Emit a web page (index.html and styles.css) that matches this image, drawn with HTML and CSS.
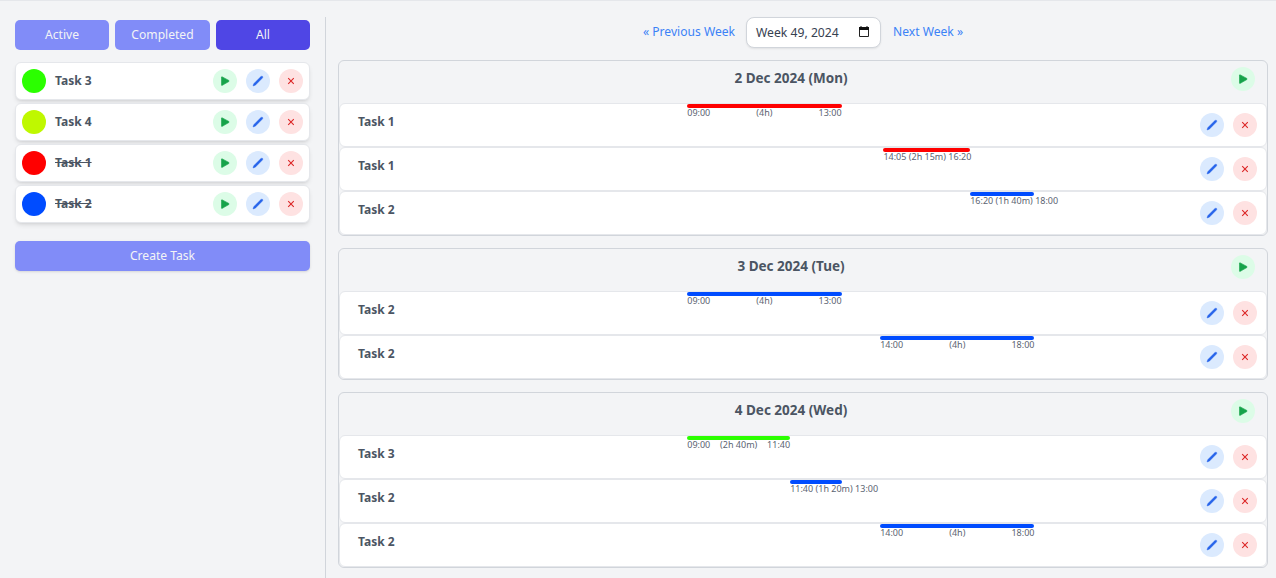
FILE: index.html
```html
<!DOCTYPE html>
<html lang="en">
<head>
<meta charset="utf-8">
<title>Tasks</title>
<link rel="stylesheet" href="styles.css">
</head>
<body>
<svg class="defs" aria-hidden="true">
  <symbol id="play" viewBox="0 0 24 24"><path d="M8.5 8.3Q8.5 7.5 9.3 7.9L15.8 11.4Q16.5 12 15.8 12.6L9.3 16.3Q8.5 16.7 8.5 15.9Z" fill="#16a34a" stroke="#16a34a" stroke-width=".6"/></symbol>
  <symbol id="pencil" viewBox="0 0 24 24"><path d="M7 17L7.7 14.7L14.9 7.6Q15.8 6.9 16.6 7.4Q17.1 8.2 16.4 9.1L9.3 16.2Z" fill="#2563eb" stroke="#2563eb" stroke-width=".4" stroke-linejoin="round"/></symbol>
  <symbol id="cross" viewBox="0 0 24 24"><path d="M9.2 9.2L14.8 14.8M14.8 9.2L9.2 14.8" fill="none" stroke="#dc2626" stroke-width="1.1"/></symbol>
</svg>
<div class="page">
  <aside class="sidebar">
    <div class="filters">
      <button class="btn">Active</button>
      <button class="btn">Completed</button>
      <button class="btn selected">All</button>
    </div>
    <ul class="tasks" id="tasks"></ul>
    <button class="btn create">Create Task</button>
  </aside>
  <main class="main">
    <nav class="weeks">
      <a class="link">« Previous Week</a>
      <div class="picker"><span>Week 49, 2024</span>
        <svg class="calendar" viewBox="0 0 12 12"><path d="M1.5 2.5H10.5V10.5H1.5Z" fill="none" stroke="#222" stroke-width="1"/><path d="M1 1H11V4H1Z" fill="#111"/><path d="M3 0V2M9 0V2" stroke="#111" stroke-width="1"/></svg>
      </div>
      <a class="link">Next Week »</a>
    </nav>
    <div class="days" id="days"></div>
  </main>
</div>
<script src="app.js"></script>
</body>
</html>
```
FILE: styles.css
```css
* { box-sizing: border-box; }
body {
  margin: 0;
  height: 578px;
  overflow: hidden;
  background: #f3f4f6;
  color: #4b5563;
  font: 12px/20px "Noto Sans", sans-serif;
}
.defs { display: none; }
.page {
  display: flex;
  height: 578px;
  border-top: 1px solid #e5e7eb;
  padding-top: 16px;
}
.sidebar {
  width: 326px;
  flex: none;
  padding: 3px 15px 0;
  border-right: 1px solid #d1d5db;
}
.filters { display: grid; grid-template-columns: 94px 95px 94px; gap: 6px; }
.btn {
  height: 30px;
  padding: 0;
  border: 0;
  border-radius: 5px;
  background: #818cf8;
  color: #f3f4f6;
  font: 12.1px/28px "Noto Sans", sans-serif;
}
.btn.selected { background: #4f46e5; }
.btn.create { width: 295px; box-shadow: 0 1px 3px rgba(0,0,0,.1), 0 1px 2px -1px rgba(0,0,0,.1); }
.tasks {
  display: flex;
  flex-direction: column;
  gap: 3px;
  margin: 12px 0 18px;
  padding: 0;
  list-style: none;
}
.task {
  display: flex;
  align-items: center;
  height: 38px;
  width: 295px;
  padding: 0 6px;
  background: #fff;
  border: 1px solid #e5e7eb;
  border-radius: 6px;
  box-shadow: 0 3px 5px -1px rgba(0,0,0,.1), 0 2px 3px -2px rgba(0,0,0,.1);
}
.swatch { width: 24px; height: 24px; border-radius: 50%; }
.name { flex: 1; margin-left: 9px; padding-bottom: 1px; font-weight: 700; }
.done { text-decoration: line-through; }
.actions { display: flex; gap: 9px; }
.icon { display: block; width: 24px; height: 24px; border-radius: 50%; }
.icon.play { background: #dcfce7; }
.icon.pencil { background: #dbeafe; }
.icon.cross { background: #fee2e2; }
.main { flex: 1; padding: 0 8px 0 12px; }
.weeks { display: flex; justify-content: center; align-items: center; gap: 12px; height: 31px; padding-right: 1px; }
.link { color: #3b82f6; padding-bottom: 1px; font-size: 12.1px; white-space: nowrap; }
.link:first-child { width: 91px; }
.link:last-child { width: 69px; }
.picker {
  display: flex;
  align-items: center;
  justify-content: space-between;
  width: 135px;
  height: 31px;
  padding: 0 10px 0 9px;
  background: #fff;
  border: 1px solid #d1d5db;
  border-radius: 8px;
  color: #374151;
  font-size: 12.2px;
  box-shadow: 0 1px 2px rgba(0,0,0,.08);
}
.calendar { width: 12px; height: 12px; margin-bottom: 1px; }
.days { display: flex; flex-direction: column; gap: 12px; margin-top: 12px; }
.day { border: 1px solid #d1d5db; border-radius: 6px; }
.day-head { display: flex; height: 42px; padding: 6px 12px 0; }
.date { flex: 1; text-align: center; font-weight: 700; font-size: 13.5px; line-height: 22px; }
.entry {
  display: grid;
  height: 44px;
  background: #fff;
  border: 1px solid #e5e7eb;
  border-radius: 6px;
}
.entry > * { grid-area: 1 / 1; min-width: 0; }
.entry-row { display: flex; align-items: flex-start; padding: 9px 9px 0 18px; }
.entry-row .name { margin: -1px 0 0; }
.bar { height: 4px; border-radius: 2px; }
.times {
  display: flex;
  justify-content: space-between;
  gap: 2.4px;
  white-space: nowrap;
  font-size: 9px;
  line-height: 9px;
  color: #5b6472;
}
```
FILE: app.js
```js
const icon = n => `<svg class="icon ${n}"><use href="#${n}"/></svg>`;

const tasks = {
  'Task 3': { color: '#2bff00' },
  'Task 4': { color: '#bff800' },
  'Task 1': { color: '#ff0000', done: true },
  'Task 2': { color: '#004cff', done: true },
};

const days = [
  ['2 Dec 2024 (Mon)', [['Task 1', '09:00', '4h', '13:00'], ['Task 1', '14:05', '2h 15m', '16:20'], ['Task 2', '16:20', '1h 40m', '18:00']]],
  ['3 Dec 2024 (Tue)', [['Task 2', '09:00', '4h', '13:00'], ['Task 2', '14:00', '4h', '18:00']]],
  ['4 Dec 2024 (Wed)', [['Task 3', '09:00', '2h 40m', '11:40'], ['Task 2', '11:40', '1h 20m', '13:00'], ['Task 2', '14:00', '4h', '18:00']]],
];

// Position of a clock time within the day, in percent.
const percent = t => {
  const [h, m] = t.split(':').map(Number);
  return (h * 60 + m) / 14.4;
};

document.getElementById('tasks').innerHTML = Object.entries(tasks).map(([name, t]) => `
  <li class="task">
    <span class="swatch" style="background:${t.color}"></span>
    <span class="name"><span class="${t.done ? 'done' : ''}">${name}</span></span>
    <span class="actions">${icon('play')}${icon('pencil')}${icon('cross')}</span>
  </li>`).join('');

const entry = ([name, from, length, to]) => `
  <div class="entry">
    <div class="span" style="margin-left:${percent(from)}%;width:${percent(to) - percent(from)}%">
      <div class="bar" style="background:${tasks[name].color}"></div>
      <div class="times"><span>${from}</span><span>(${length})</span><span>${to}</span></div>
    </div>
    <div class="entry-row"><span class="name">${name}</span><span class="actions">${icon('pencil')}${icon('cross')}</span></div>
  </div>`;

document.getElementById('days').innerHTML = days.map(([date, entries]) => `
  <section class="day">
    <div class="day-head"><span class="date">${date}</span>${icon('play')}</div>
    ${entries.map(entry).join('')}
  </section>`).join('');
```
